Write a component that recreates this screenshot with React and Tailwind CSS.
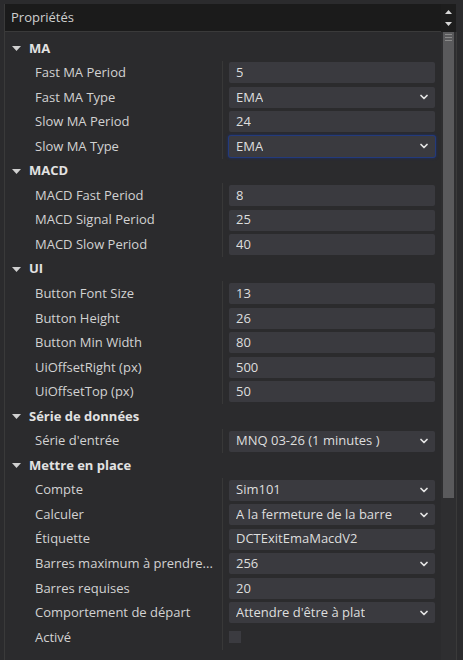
import React from "react";
import { ChevronDown } from "lucide-react";

const sections = [
  {
    title: "MA",
    rows: [
      { label: "Fast MA Period", value: "5" },
      { label: "Fast MA Type", value: "EMA", select: true },
      { label: "Slow MA Period", value: "24" },
      { label: "Slow MA Type", value: "EMA", select: true, focused: true },
    ],
  },
  {
    title: "MACD",
    rows: [
      { label: "MACD Fast Period", value: "8" },
      { label: "MACD Signal Period", value: "25" },
      { label: "MACD Slow Period", value: "40" },
    ],
  },
  {
    title: "UI",
    rows: [
      { label: "Button Font Size", value: "13" },
      { label: "Button Height", value: "26" },
      { label: "Button Min Width", value: "80" },
      { label: "UiOffsetRight (px)", value: "500" },
      { label: "UiOffsetTop (px)", value: "50" },
    ],
  },
  {
    title: "Série de données",
    rows: [{ label: "Série d'entrée", value: "MNQ 03-26 (1 minutes )", select: true }],
  },
  {
    title: "Mettre en place",
    rows: [
      { label: "Compte", value: "Sim101", select: true },
      { label: "Calculer", value: "A la fermeture de la barre", select: true },
      { label: "Étiquette", value: "DCTExitEmaMacdV2" },
      { label: "Barres maximum à prendre...", value: "256", select: true },
      { label: "Barres requises", value: "20" },
      { label: "Comportement de départ", value: "Attendre d'être à plat", select: true },
      { label: "Activé", checkbox: true },
    ],
  },
];

function Triangle({ up }) {
  return (
    <svg width="7" height="4" viewBox="0 0 7 4" className="block">
      <polygon points={up ? "0,4 3.5,0 7,4" : "0,0 7,0 3.5,4"} fill="#d8d8d8" />
    </svg>
  );
}

function Row({ row }) {
  return (
    <div className="flex h-[24.55px] items-center">
      <div className="w-[217px] shrink-0 whitespace-nowrap pl-[30px] text-[#d2d2d2]">
        {row.label}
      </div>
      <div className="flex h-full flex-1 items-center border-l border-[#383838] pl-[6px] pr-[6px]">
        {row.checkbox ? (
          <div className="h-[12px] w-[12px] bg-[#3b3b40]" />
        ) : (
          <div
            className={
              "flex h-[21px] w-full items-center justify-between rounded-[2px] bg-[#3a3a3f] pl-[7px] pr-[5px] text-[#dedede] " +
              (row.focused ? "shadow-[0_0_0_1px_#233a7c,0_0_3px_1px_#1c3070]" : "")
            }
          >
            <span className="truncate">{row.value}</span>
            {row.select && (
              <ChevronDown size={12} strokeWidth={3.5} color="#e4e4e4" />
            )}
          </div>
        )}
      </div>
    </div>
  );
}

export default function App() {
  return (
    <div
      className="flex h-[660px] w-[463px] flex-col overflow-hidden bg-[#2b2b2d] pl-[4px] pt-[4px] text-[13px]"
      style={{ fontFamily: '"Open Sans", "Liberation Sans", sans-serif' }}
    >
      {/* Header */}
      <div className="flex h-[28px] shrink-0">
        <div className="flex w-[437px] items-center border-b border-l border-[#3a3a3a] bg-[#1b1b1b] pl-[6px] text-[13px] text-[#cfcfcf]">
          Propriétés
        </div>
        <div className="flex w-[15px] flex-col items-center justify-center gap-[8px] bg-[#1d1d1d]">
          <Triangle up />
          <Triangle />
        </div>
      </div>

      {/* Body */}
      <div className="flex min-h-0 flex-1">
        <div className="w-[437px] border-l border-[#3a3a3a] pt-[4px]">
          {sections.map((s) => (
            <div key={s.title}>
              <div className="flex h-[24.55px] items-center gap-[8px] pl-[7px]">
                <svg width="9" height="5" viewBox="0 0 9 5">
                  <polygon points="0,0 9,0 4.5,5" fill="#d0d0d0" />
                </svg>
                <span className="font-bold text-[#e2e2e2]">{s.title}</span>
              </div>
              {s.rows.map((r) => (
                <Row key={r.label} row={r} />
              ))}
            </div>
          ))}
        </div>

        {/* Scrollbar */}
        <div className="flex w-[15px] flex-col bg-[#2e2e30] px-[2px]">
          <div className="flex h-[466px] flex-col gap-[2px] bg-[#5a5a5c] pt-[2px]">
            <div className="mx-[2px] h-px bg-[#8a8a8a]" />
            <div className="mx-[2px] h-px bg-[#8a8a8a]" />
            <div className="mx-[2px] h-px bg-[#8a8a8a]" />
          </div>
        </div>
        <div className="w-px bg-[#3a3a3a]" />
      </div>
    </div>
  );
}
